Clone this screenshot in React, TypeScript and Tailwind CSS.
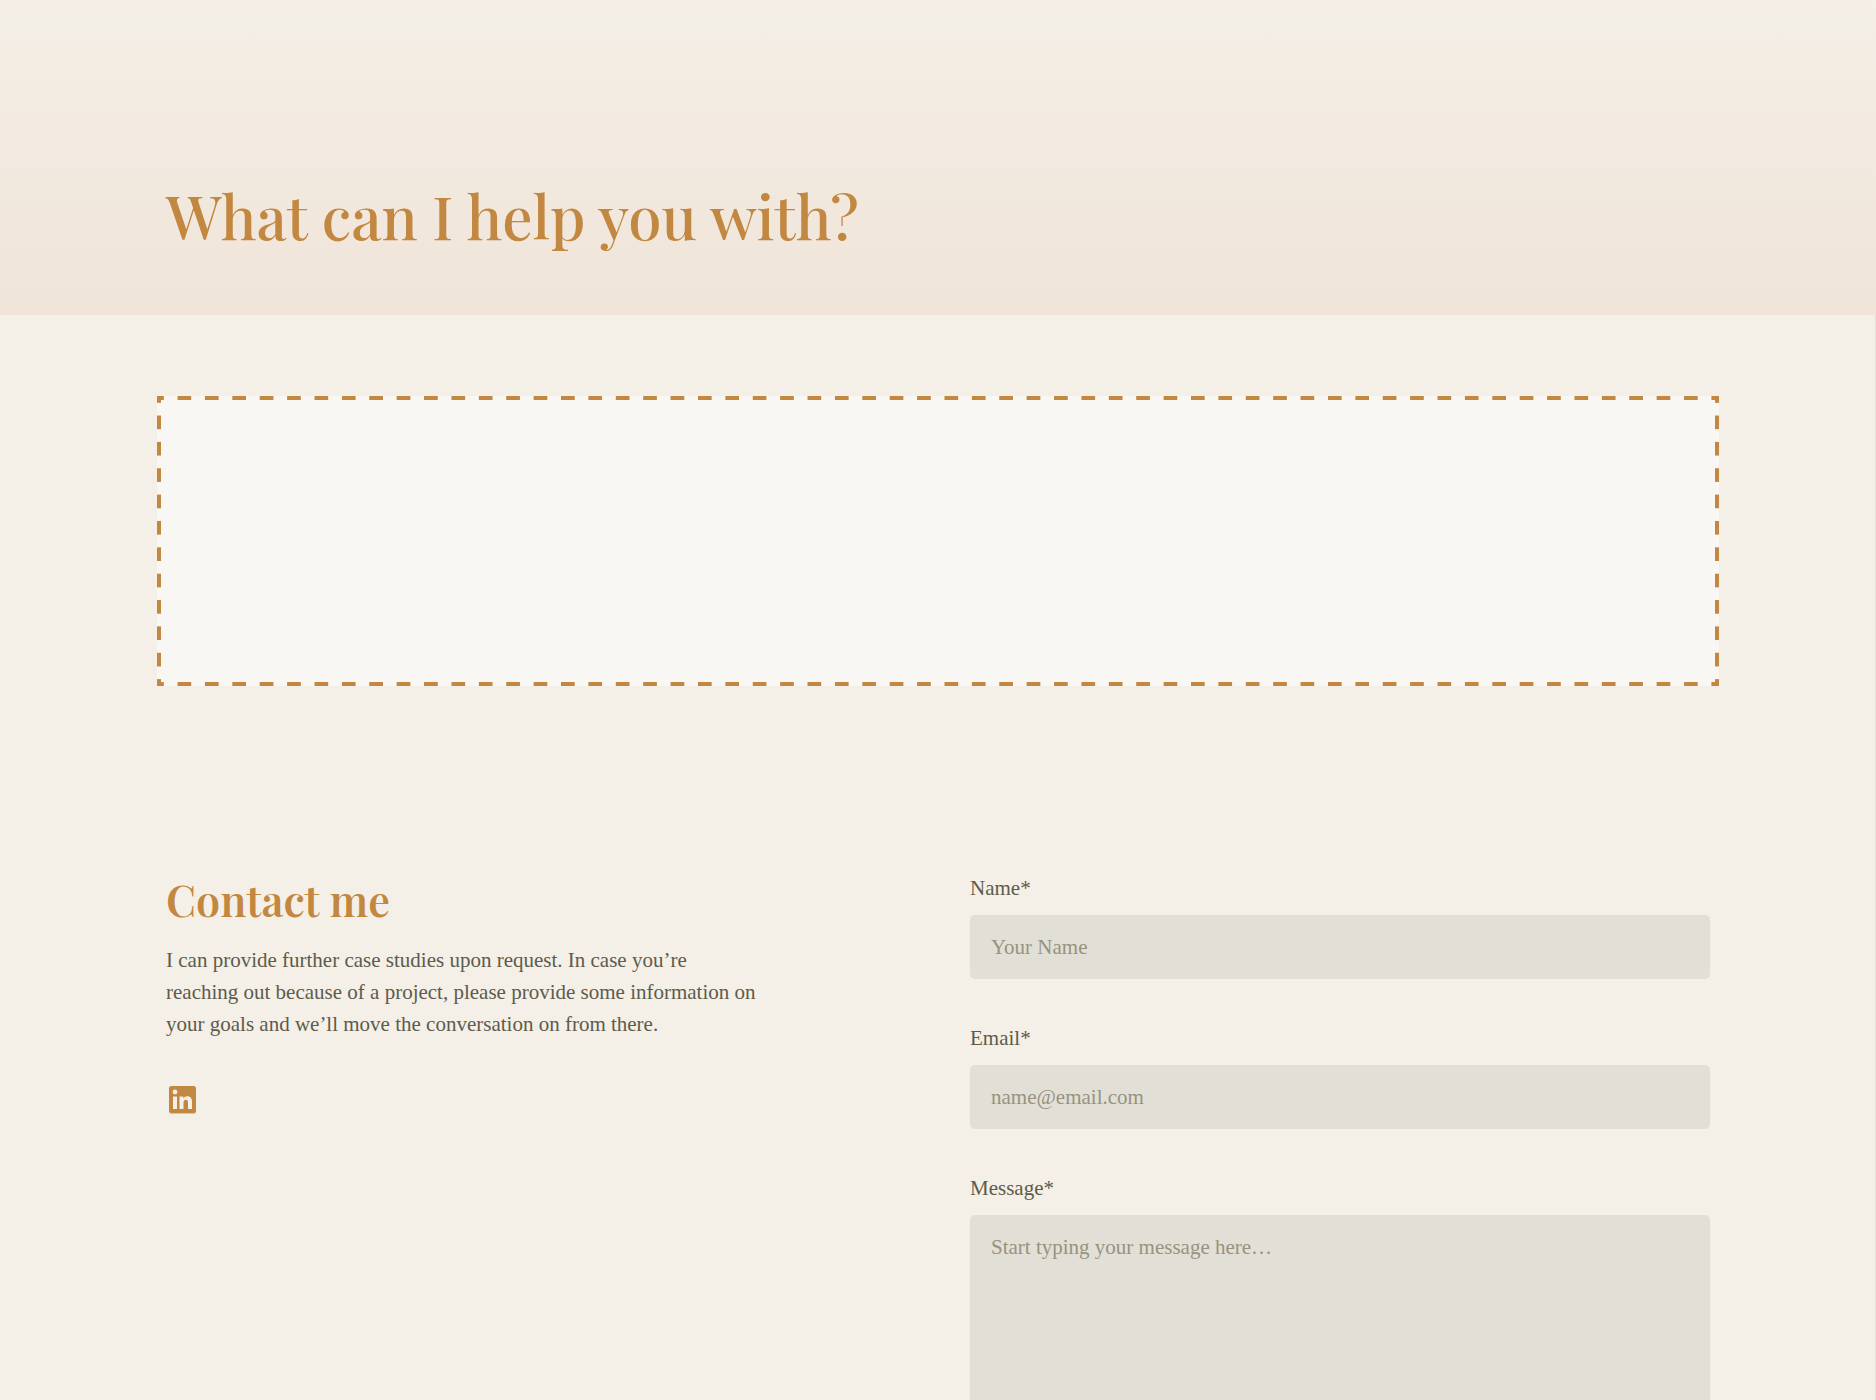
import React from 'react';

interface FieldProps {
  id: string;
  label: string;
  placeholder: string;
  type?: string;
  multiline?: boolean;
}

const fieldStyle =
  'block w-full rounded-[5px] bg-[#e2dfd6] px-[21px] py-4 text-[21px] leading-8 text-[#5c5c4c] placeholder:text-[#96937f] outline-none';

const Field: React.FC<FieldProps> = ({ id, label, placeholder, type = 'text', multiline }) => (
  <div>
    <label htmlFor={id} className="mb-[11px] block text-[21px] leading-8 font-medium">
      {label}
    </label>
    {multiline ? (
      <textarea id={id} placeholder={placeholder} className={`${fieldStyle} h-[240px] resize-none`} />
    ) : (
      <input id={id} type={type} placeholder={placeholder} className={fieldStyle} />
    )}
  </div>
);

const LinkedInIcon: React.FC = () => (
  <svg width="28" height="28" viewBox="0 0 28 28" fill="none" aria-hidden="true">
    <rect x="0" y="1" width="27" height="27" rx="2.5" fill="#dcc6a8" />
    <rect x="0" y="0" width="27" height="27" rx="2.5" fill="#c28740" />
    <circle cx="6" cy="6" r="2.4" fill="#f4efe7" />
    <path d="M4 10.5h4V23H4z" fill="#f4efe7" />
    <path
      d="M10.5 10.5h3.8v1.7c.7-1.2 2.1-2 4-2 3.5 0 4.7 2.3 4.7 5.6V23h-4v-6.4c0-1.8-.5-2.9-2-2.9-1.7 0-2.5 1.2-2.5 3V23h-4z"
      fill="#f4efe7"
    />
  </svg>
);

// dashes are drawn as tiles so that both sides end on half a dash at the corners
const Placeholder: React.FC = () => (
  <div className="relative h-[290px] bg-[#f8f7f3]">
    <div className="absolute inset-x-0 top-0 h-1 bg-[linear-gradient(to_right,#c28740_25%,transparent_25%,transparent_75%,#c28740_75%)] bg-[length:calc(100%/57)_4px]" />
    <div className="absolute inset-x-0 bottom-0 h-1 bg-[linear-gradient(to_right,#c28740_25%,transparent_25%,transparent_75%,#c28740_75%)] bg-[length:calc(100%/57)_4px]" />
    <div className="absolute inset-y-0 left-0 w-1 bg-[linear-gradient(to_bottom,#c28740_25%,transparent_25%,transparent_75%,#c28740_75%)] bg-[length:4px_calc(100%/11)]" />
    <div className="absolute inset-y-0 right-0 w-1 bg-[linear-gradient(to_bottom,#c28740_25%,transparent_25%,transparent_75%,#c28740_75%)] bg-[length:4px_calc(100%/11)]" />
  </div>
);

export default function App() {
  return (
    <div className="h-screen overflow-hidden bg-[#f4efe7] font-['Liberation_Serif',serif] text-[#5c5c4c] shadow-[inset_-1px_0_#e6e1d8]">
      <header className="bg-linear-to-b from-[#f4efe7] to-[#f0e4d8] pt-[175px] pb-[60px]">
        <div className="mx-auto max-w-[1562px] px-[9px]">
          <h1 className="font-['Playfair_Display','Liberation_Serif',serif] text-[60px] leading-[80px] font-medium text-[#c28740]">
            What can I help you with?
          </h1>
        </div>
      </header>

      <main className="mx-auto max-w-[1562px] pt-[81px]">
        <Placeholder />

        <section className="grid grid-cols-2 gap-16 px-[9px] pt-[186px]">
          <div>
            <h2 className="font-['Playfair_Display','Liberation_Serif',serif] text-[43px] leading-[54px] font-semibold text-[#c28740]">
              Contact me
            </h2>
            <p className="mt-[18px] max-w-[594px] text-[21px] leading-8">
              I can provide further case studies upon request. In case you’re reaching out because of a project, please
              provide some information on your goals and we’ll move the conversation on from there.
            </p>
            <a href="#linkedin" aria-label="LinkedIn" className="mt-[46px] ml-[3px] inline-block">
              <LinkedInIcon />
            </a>
          </div>

          <form className="flex flex-col gap-[43px]">
            <Field id="name" label="Name*" placeholder="Your Name" />
            <Field id="email" label="Email*" placeholder="name@email.com" type="email" />
            <Field id="message" label="Message*" placeholder="Start typing your message here…" multiline />
          </form>
        </section>
      </main>
    </div>
  );
}
